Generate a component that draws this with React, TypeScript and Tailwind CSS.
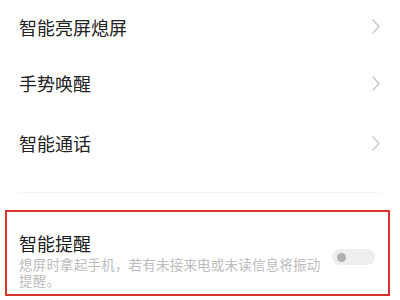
const rows = ["智能亮屏熄屏", "手势唤醒", "智能通话"];

const Chevron = () => (
  <svg width="8" height="15" viewBox="0 0 8 15" fill="none" className="shrink-0">
    <path d="M1 1 L7 7.5 L1 14" stroke="#c6c6c6" strokeWidth="1.3" strokeLinecap="round" strokeLinejoin="round" />
  </svg>
);

const App = () => {
  return (
    <div
      className="w-[400px] h-[300px] overflow-hidden bg-white"
      style={{ fontFamily: '"Noto Sans CJK SC", "Noto Sans", sans-serif' }}
    >
      {/* Settings rows */}
      <div className="pl-[19px] pr-[20px]">
        {rows.map((label, i) => (
          <div
            key={label}
            className={`flex items-center justify-between ${i === 0 ? "h-[53px]" : "h-[60px]"}`}
          >
            <span className="text-[18px] leading-none text-[#222222]">{label}</span>
            <Chevron />
          </div>
        ))}
        <div className="h-[19px]" />
        <div className="h-px bg-[#f5f5f5]" />
      </div>

      {/* Highlighted item */}
      <div className="mt-[17px] mx-[5px] w-[385px] h-[86px] border-2 border-[#d9342b] pl-[12px] pr-[12px] pt-[20px] flex items-start justify-between">
        <div className="flex flex-col">
          <span className="text-[18px] leading-[22px] text-[#1a1a1a]">智能提醒</span>
          <p className="mt-[2px] w-[306px] text-[13.5px] leading-[16px] tracking-[0.2px] text-[#bdbdbd]">
            熄屏时拿起手机，若有未接来电或未读信息将振动提醒。
          </p>
        </div>
        <div className="mt-[17px] mr-[1px] w-[43px] h-[16px] rounded-full bg-[#eeeeee] flex items-center pl-[5px]">
          <div className="w-[9px] h-[9px] rounded-full bg-[#b0b0b0]" />
        </div>
      </div>
    </div>
  );
};

export default App;
